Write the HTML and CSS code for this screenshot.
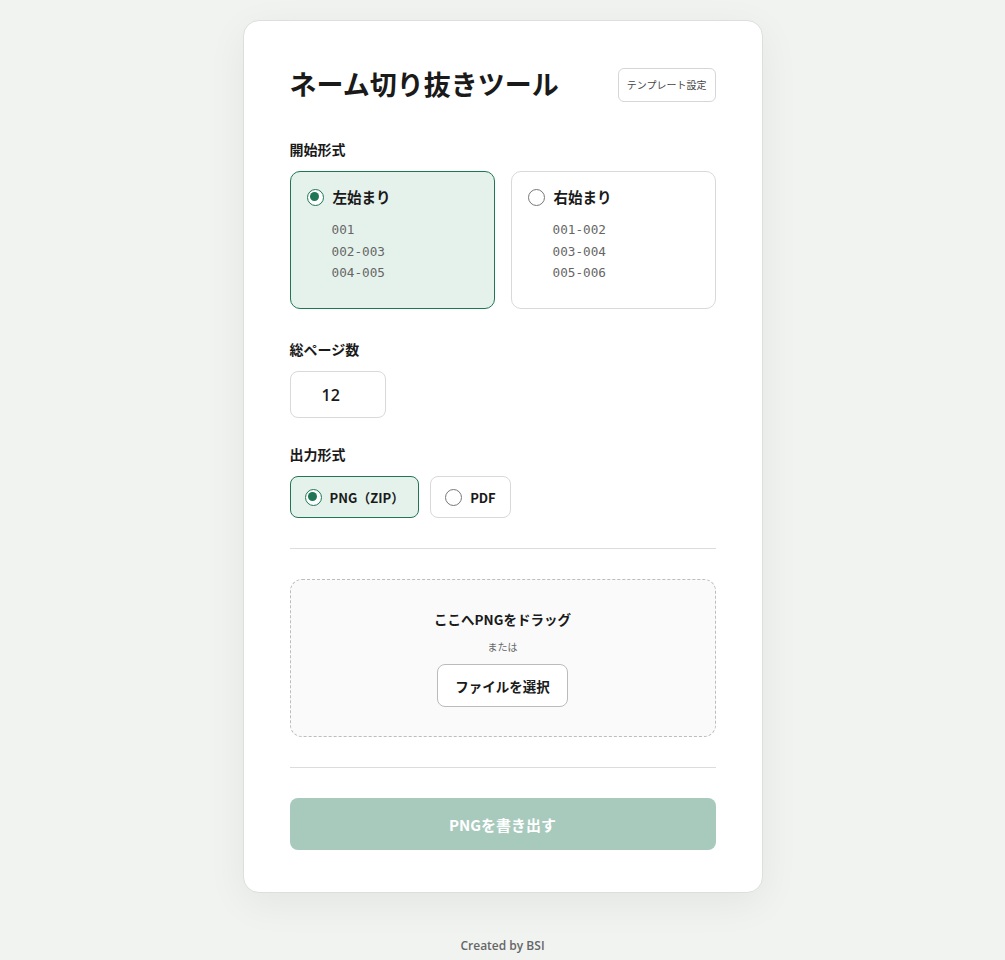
FILE: index.html
```html
<!DOCTYPE html>
<html lang="ja">
<head>
    <meta charset="utf-8">
    <meta name="viewport" content="width=device-width, initial-scale=1.0">
    <title>ネーム切り抜きツール</title>
    <link rel="stylesheet" href="styles.css">
</head>
<body>
    <div class="card">
        <div class="header">
            <h1>ネーム切り抜きツール</h1>
            <button class="btn-small">テンプレート設定</button>
        </div>

        <div class="section start">
            <div class="label">開始形式</div>
            <div class="start-options">
                <div class="option selected">
                    <div class="option-title"><span class="radio on"></span>左始まり</div>
                    <div class="pages">001<br>002-003<br>004-005</div>
                </div>
                <div class="option">
                    <div class="option-title"><span class="radio"></span>右始まり</div>
                    <div class="pages">001-002<br>003-004<br>005-006</div>
                </div>
            </div>
        </div>

        <div class="section count">
            <div class="label">総ページ数</div>
            <input class="num" type="number" value="12">
        </div>

        <div class="section">
            <div class="label">出力形式</div>
            <div class="formats">
                <div class="format selected"><span class="radio on"></span>PNG（ZIP）</div>
                <div class="format"><span class="radio"></span>PDF</div>
            </div>
        </div>

        <hr>

        <div class="dropzone">
            <div class="drop-title">ここへPNGをドラッグ</div>
            <div class="drop-or">または</div>
            <button class="btn-file">ファイルを選択</button>
        </div>

        <hr>

        <button class="btn-export" disabled>PNGを書き出す</button>
    </div>

    <div class="footer">Created by BSI</div>
</body>
</html>
```

FILE: styles.css
```css
* {
    box-sizing: border-box;
}
body {
    margin: 0;
    padding: 20px 0 0;
    background: #f1f3f1;
    font-family: "Open Sans", "Noto Sans CJK JP", sans-serif;
    color: #1a1a1a;
}
.card {
    width: 520px;
    margin: 0 auto;
    background: #fff;
    border: 1px solid #dcdfdc;
    border-radius: 16px;
    padding: 43px 46px 42px;
    box-shadow: 0 10px 40px rgba(0,0,0,0.06);
}
.header {
    display: flex;
    justify-content: space-between;
    align-items: center;
    margin-bottom: 35px;
}
h1 {
    margin: 0;
    font-size: 27px;
    font-weight: 700;
    line-height: 40px;
    font-family: "Noto Sans CJK JP", sans-serif;
}
.btn-small {
    font-family: "Noto Sans CJK JP", sans-serif;
    background: #fff;
    border: 1px solid #d6d6d6;
    border-radius: 6px;
    font-size: 10px;
    color: #444;
    height: 34px;
    padding: 0 8px;
    margin-top: 1px;
}
.section {
    margin-bottom: 0;
}
.section.start {
    margin-bottom: 30px;
}
.section.count {
    margin-bottom: 26px;
}
.label {
    font-size: 14px;
    font-weight: 700;
    line-height: 20px;
    margin-bottom: 12px;
    font-family: "Noto Sans CJK JP", sans-serif;
}
.start-options {
    display: grid;
    grid-template-columns: 1fr 1fr;
    gap: 16px;
}
.option {
    border: 1px solid #d9d9d9;
    border-radius: 10px;
    height: 138px;
    padding: 13px 16px;
}
.option.selected {
    background: #e5f2ec;
    border-color: #1e7654;
}
.option-title {
    display: flex;
    align-items: center;
    gap: 9px;
    font-size: 14.5px;
    font-weight: 700;
    line-height: 24px;
    font-family: "Noto Sans CJK JP", sans-serif;
}
.radio {
    width: 17px;
    height: 17px;
    border: 1.5px solid #777;
    border-radius: 50%;
    flex: none;
    position: relative;
    background: #fff;
}
.radio.on {
    border-color: #1e7654;
}
.radio.on::after {
    content: "";
    position: absolute;
    left: 2.5px;
    top: 2.5px;
    width: 9px;
    height: 9px;
    border-radius: 50%;
    background: #1e7654;
}
.pages {
    margin: 10px 0 0 25px;
    font-family: "DejaVu Sans Mono", monospace;
    font-size: 12.7px;
    line-height: 21.5px;
    color: #666;
}
.num {
    display: block;
    width: 96px;
    height: 47px;
    border: 1px solid #d9d9d9;
    border-radius: 8px;
    font-size: 16px;
    font-weight: 600;
    font-family: "Open Sans", sans-serif;
    padding: 0 0 0 31px;
    color: #1a1a1a;
    -moz-appearance: textfield;
}
.num::-webkit-inner-spin-button,
.num::-webkit-outer-spin-button {
    -webkit-appearance: none;
    margin: 0;
}
.formats {
    display: flex;
    gap: 11px;
}
.format {
    display: flex;
    align-items: center;
    gap: 8px;
    height: 42px;
    padding: 0 14px;
    border: 1px solid #d9d9d9;
    border-radius: 8px;
    font-size: 13px;
    font-weight: 700;
    font-family: "Noto Sans CJK JP", sans-serif;
}
.format.selected {
    background: #e5f2ec;
    border-color: #1e7654;
}
hr {
    border: none;
    border-top: 1px solid #dcdcdc;
    margin: 30px 0;
}
.dropzone {
    border: 1px dashed #bdbdbd;
    border-radius: 12px;
    background: #fafafa;
    height: 158px;
    display: flex;
    flex-direction: column;
    align-items: center;
    padding-top: 28px;
    font-family: "Noto Sans CJK JP", sans-serif;
}
.drop-title {
    font-size: 13.5px;
    font-weight: 700;
    line-height: 22px;
}
.drop-or {
    font-size: 10px;
    color: #666;
    margin-top: 9px;
    line-height: 16px;
}
.btn-file {
    margin-top: 9px;
    height: 43px;
    padding: 0 17px;
    background: #fff;
    border: 1px solid #bbb;
    border-radius: 8px;
    font-size: 13.5px;
    font-weight: 700;
    font-family: "Noto Sans CJK JP", sans-serif;
    color: #1a1a1a;
}
.btn-export {
    width: 100%;
    height: 52px;
    border: none;
    border-radius: 8px;
    background: #a8cabd;
    color: #fff;
    font-size: 15px;
    font-weight: 700;
    font-family: "Noto Sans CJK JP", sans-serif;
}
.footer {
    text-align: center;
    font-size: 12px;
    font-weight: 600;
    color: #666;
    margin-top: 44px;
}
```
